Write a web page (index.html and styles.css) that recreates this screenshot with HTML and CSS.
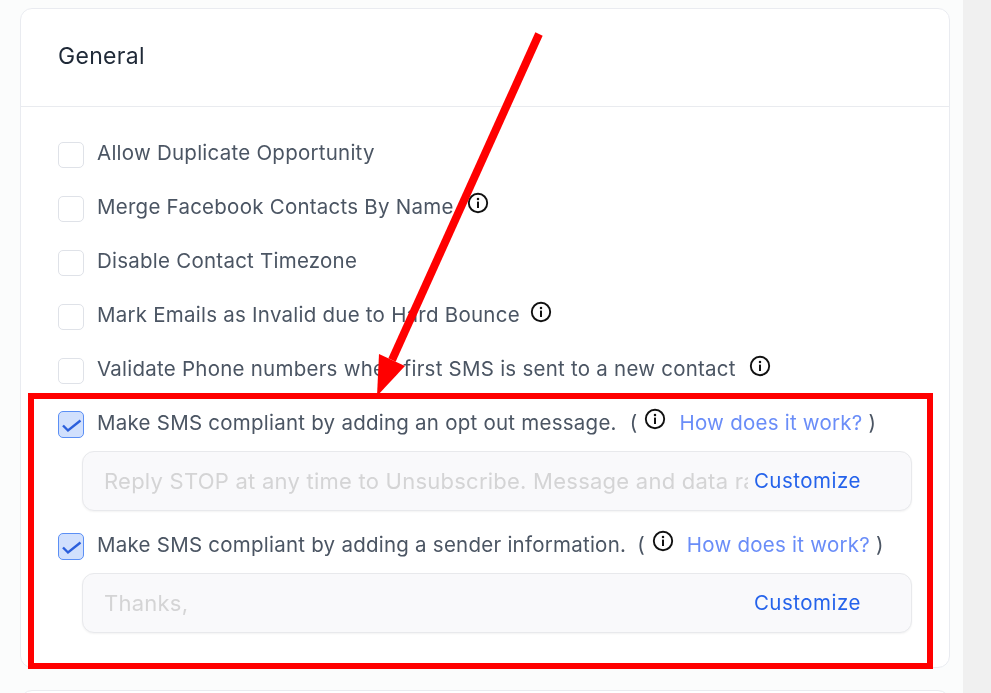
FILE: index.html
```html
<!DOCTYPE html>
<html lang="en">
<head>
    <meta charset="UTF-8">
    <meta name="viewport" content="width=device-width, initial-scale=1.0">
    <title>General settings</title>
    <link rel="stylesheet" href="styles.css">
</head>
<body>

<svg class="icon-defs" width="0" height="0">
    <symbol id="info" viewBox="0 0 22 22">
        <circle cx="11" cy="11" r="9.2" fill="none" stroke="currentColor" stroke-width="1.9"/>
        <rect x="10" y="9.6" width="2" height="6.4" fill="currentColor"/>
        <circle cx="11" cy="6.9" r="1.25" fill="currentColor"/>
    </symbol>
    <symbol id="tick" viewBox="0 0 23 24">
        <path d="M4 13.5l5 5L21.5 8.5" fill="none" stroke="currentColor" stroke-width="2.4"/>
    </symbol>
</svg>

<main class="content">
    <section class="card">
        <h2 class="card-title">General</h2>

        <div class="card-body">
            <div class="row">
                <span class="check"></span>
                <span class="label">Allow Duplicate Opportunity</span>
            </div>
            <div class="row">
                <span class="check"></span>
                <span class="label">Merge Facebook Contacts By Name</span>
                <svg class="info info-raised"><use href="#info"/></svg>
            </div>
            <div class="row">
                <span class="check"></span>
                <span class="label">Disable Contact Timezone</span>
            </div>
            <div class="row">
                <span class="check"></span>
                <span class="label">Mark Emails as Invalid due to Hard Bounce</span>
                <svg class="info info-near"><use href="#info"/></svg>
            </div>
            <div class="row">
                <span class="check"></span>
                <span class="label">Validate Phone numbers when first SMS is sent to a new contact</span>
                <svg class="info"><use href="#info"/></svg>
            </div>

            <div class="row">
                <span class="check checked"><svg class="tick"><use href="#tick"/></svg></span>
                <span class="label">Make SMS compliant by adding an opt out message.</span>
                <span class="paren">(</span>
                <svg class="info info-raised info-paren"><use href="#info"/></svg>
                <a class="help" href="#">How does it work?</a>
                <span class="paren-end">)</span>
            </div>
            <div class="field">
                <div class="field-text">Reply STOP at any time to Unsubscribe. Message and data rates may apply.</div>
                <a class="customize" href="#">Customize</a>
            </div>

            <div class="row row-sender">
                <span class="check checked"><svg class="tick"><use href="#tick"/></svg></span>
                <span class="label">Make SMS compliant by adding a sender information.</span>
                <span class="paren">(</span>
                <svg class="info info-raised info-paren"><use href="#info"/></svg>
                <a class="help" href="#">How does it work?</a>
                <span class="paren-end">)</span>
            </div>
            <div class="field">
                <div class="field-text">Thanks,</div>
                <a class="customize" href="#">Customize</a>
            </div>
        </div>
    </section>

    <section class="card card-next"></section>
</main>

<aside class="side-strip"></aside>

<!-- annotation drawn over the screenshot -->
<div class="mark-box"></div>
<svg class="mark-arrow" width="991" height="693" viewBox="0 0 991 693">
    <line x1="539" y1="34" x2="392" y2="360" stroke="#ff0000" stroke-width="8"/>
    <polygon points="379,354 405,366 377,396" fill="#ff0000"/>
</svg>

</body>
</html>
```

FILE: styles.css
```css
html, body {
    height: 100%;
}

body {
    margin: 0;
    display: flex;
    overflow: hidden;
    background-color: #fbfcfc;
    font-family: Inter, "Liberation Sans", sans-serif;
}

.icon-defs {
    position: absolute;
}

/* the reference is a slightly soft, upscaled capture */
.content {
    width: 963px;
    height: 100%;
    flex-shrink: 0;
    overflow: hidden;
    padding: 8px 13px 0 20px;
    box-sizing: border-box;
    filter: blur(0.35px);
}

.side-strip {
    flex-grow: 1;
    background-color: #f0f0f0;
}

.card {
    background-color: #fff;
    border: 1px solid #e9ebf0;
    border-radius: 12px;
    box-sizing: border-box;
    height: 660px;
}

.card-next {
    margin-top: 22px;
    height: 40px;
}

.card-title {
    margin: 0;
    height: 98px;
    box-sizing: border-box;
    padding-left: 37px;
    line-height: 95px;
    font-size: 23px;
    letter-spacing: 0.3px;
    font-weight: 400;
    color: #1f2937;
    border-bottom: 1px solid #e9ebef;
}

.card-body {
    padding: 18px 37px 0 37px;
}

.row {
    display: flex;
    align-items: center;
    height: 54px;
    font-size: 20.5px;
    letter-spacing: 0.24px;
    color: #4b5563;
}

.row-sender {
    margin-top: 6px;
}

.check {
    width: 26px;
    height: 26px;
    margin-top: 6px;
    margin-right: 13px;
    flex-shrink: 0;
    box-sizing: border-box;
    background-color: #fff;
    border: 1px solid #dfe2e8;
    border-radius: 5px;
}

.check.checked {
    height: 27px;
    margin-top: 4px;
    background-color: #d1e0fd;
    border: 1.5px solid #5b8ff5;
}

.tick {
    display: block;
    width: 23px;
    height: 24px;
    color: #2b5fdc;
}

.label {
    white-space: nowrap;
}

.info {
    width: 22px;
    height: 22px;
    margin-left: 13px;
    margin-bottom: 4px;
    flex-shrink: 0;
    color: #111;
}

.info-raised {
    margin-bottom: 6px;
}

.info-near {
    margin-left: 10px;
}

.info-paren {
    margin-left: 7px;
}

.paren {
    margin-left: 13px;
}

.row-sender .paren {
    margin-left: 11px;
}

.help {
    margin-left: 13px;
    color: #6a8df8;
    text-decoration: none;
    white-space: nowrap;
}

.paren-end {
    margin-left: 6px;
}

.field {
    display: flex;
    align-items: center;
    height: 60px;
    margin: 2px 0 0 24px;
    padding: 0 50px 0 21px;
    box-sizing: border-box;
    background-color: #f9f9fb;
    border: 1px solid #e8e9ec;
    border-radius: 12px;
    box-shadow: 0 1px 2px rgba(0, 0, 0, 0.05);
    letter-spacing: 0.24px;
}

.field-text {
    flex-grow: 1;
    min-width: 0;
    overflow: hidden;
    white-space: nowrap;
    font-size: 22px;
    color: #d4d4d5;
    margin-right: 6px;
}

.customize {
    margin-bottom: 2px;
    font-size: 20.5px;
    letter-spacing: 0.5px;
    color: #2563eb;
    text-decoration: none;
    flex-shrink: 0;
}

.mark-box {
    position: absolute;
    left: 28px;
    top: 393px;
    width: 905px;
    height: 276px;
    box-sizing: border-box;
    border: 6px solid #ff0000;
}

.mark-arrow {
    position: absolute;
    left: 0;
    top: 0;
    pointer-events: none;
}
```
